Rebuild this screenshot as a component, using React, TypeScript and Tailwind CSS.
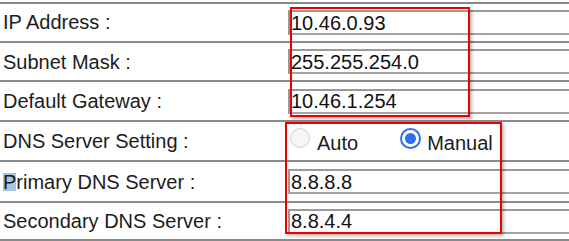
import React from "react";

const font = { fontFamily: '"Liberation Sans", Arial, sans-serif' };

function Field({ value }: { value: string }) {
  return (
    <div className="flex-1 min-w-0 flex items-center">
      <div className="h-[25px] w-[300px] shrink-0 border-2 border-[#a4a4a4] border-t-[#9a9a9a] border-l-[#999999] bg-white flex items-center pl-[1px] text-[20px] leading-none text-[#111]">
        {value}
      </div>
    </div>
  );
}

export default function App() {
  return (
    <div className="w-[569px] h-[241px] bg-white relative overflow-hidden pt-[2px] text-[#1c1c1c]" style={font}>
      <div className="border-t-2 border-[#8a8a8a]">
        <div className="flex items-center h-[39px] border-b-2 border-[#8a8a8a]">
          <div className="w-[288px] shrink-0 pl-[3px] text-[20px] leading-none pb-[2px]">IP Address :</div>
          <Field value="10.46.0.93" />
        </div>
        <div className="flex items-center h-[39px] border-b-2 border-[#8a8a8a]">
          <div className="w-[288px] shrink-0 pl-[3px] text-[20px] leading-none">Subnet Mask :</div>
          <Field value="255.255.254.0" />
        </div>
        <div className="flex items-center h-[40px] border-b-2 border-[#8a8a8a]">
          <div className="w-[288px] shrink-0 pl-[3px] text-[20px] leading-none">Default Gateway :</div>
          <Field value="10.46.1.254" />
        </div>
        <div className="flex items-center h-[40px] border-b-2 border-[#8a8a8a]">
          <div className="w-[288px] shrink-0 pl-[3px] text-[20px] leading-none">DNS Server Setting :</div>
          <div className="flex items-center pl-[2px]">
            <div className="w-[20px] h-[20px] rounded-full border-[1.5px] border-[#cfcfcf] bg-[#f6f6f6] mb-[6px]" />
            <span className="ml-[7px] text-[20px] leading-none mt-[4px]">Auto</span>
            <div className="ml-[42px] w-[21px] h-[21px] rounded-full border-2 border-[#2f6fe8] bg-white flex items-center justify-center mb-[6px]">
              <div className="w-[11px] h-[11px] rounded-full bg-[#2f6fe8]" />
            </div>
            <span className="ml-[6px] text-[20px] leading-none mt-[4px]">Manual</span>
          </div>
        </div>
        <div className="flex items-center h-[41px] border-b-2 border-[#8a8a8a]">
          <div className="w-[288px] shrink-0 pl-[3px] text-[20px] leading-none">
            <span className="inline-block bg-[#a6c4e2] leading-[18px]">P</span>rimary DNS Server :
          </div>
          <Field value="8.8.8.8" />
        </div>
        <div className="flex items-center h-[38px] border-b-2 border-[#8a8a8a]">
          <div className="w-[288px] shrink-0 pl-[3px] text-[20px] leading-none">Secondary DNS Server :</div>
          <Field value="8.8.4.4" />
        </div>
      </div>

      <div className="absolute left-[290px] top-[7px] w-[180px] h-[110px] border-[2.5px] border-[#ee0000] shadow-[2px_2px_3px_rgba(0,0,0,0.28)]" />
      <div className="absolute left-[285px] top-[122px] w-[217px] h-[112px] border-[2.5px] border-[#ee0000] shadow-[2px_2px_3px_rgba(0,0,0,0.28)]" />
    </div>
  );
}
